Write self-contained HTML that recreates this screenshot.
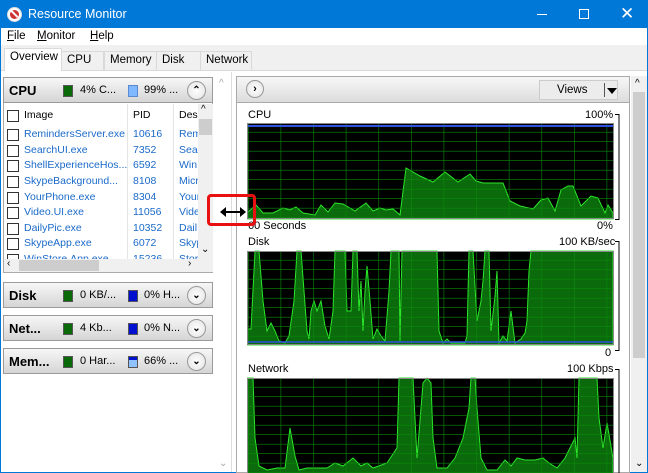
<!DOCTYPE html>
<html><head><meta charset="utf-8"><style>
*{margin:0;padding:0;box-sizing:border-box}
body{width:648px;height:473px;overflow:hidden;background:#f0f0f0;font-family:"Liberation Sans",sans-serif;font-size:11.5px;color:#000;position:relative}
.a{position:absolute}
.title{left:0;top:0;width:648px;height:28px;background:#0078d7;color:#fff;font-size:12.5px}
.menu{left:1px;top:28px;width:646px;height:17px;background:#fff}
.menu span{position:absolute;top:2px}
.tab{position:absolute;top:51px;height:19px;border:1px solid #d9d9d9;border-bottom:none;background:#f0f0f0;padding:2px 5px;font-size:11.5px}
.hdr{position:absolute;left:3px;width:210px;height:26px;border:1px solid #9a9a9a;background:linear-gradient(#f7f7f7,#d5d5d5);}
.hdr b{position:absolute;left:5px;top:5px;font-size:13px}
.sw{position:absolute;top:7px;width:10px;height:12px;border:1px solid #555}
.hdr .t{position:absolute;top:6px;font-size:11px}
.btn{position:absolute;left:183px;top:3px;width:19px;height:19px;border-radius:50%;border:1px solid #999;background:radial-gradient(#fff,#e2e2e2);font-size:10px;text-align:center;line-height:17px;font-weight:bold}
.row{position:absolute;left:4px;width:194px;height:15px;font-size:10.5px;color:#1b6ac9;white-space:nowrap}
.cb{position:absolute;left:3px;top:1px;width:12px;height:12px;border:1px solid #333;background:#fff}
.lbl{position:absolute;font-size:11px}
</style></head><body>
<div class="a title">
 <div class="a" style="left:7px;top:7px;width:15px;height:15px;border-radius:50%;background:#fff;border:1px solid #ddd"><div class="a" style="left:2px;top:2px;width:9px;height:9px;border-radius:50%;background:#c33"></div><div class="a" style="left:2px;top:5px;width:9px;height:2px;background:#fff;transform:rotate(45deg)"></div></div>
 <span class="a" style="left:28px;top:7px">Resource Monitor</span>
 <div class="a" style="left:537px;top:14px;width:10px;height:1px;background:#fff"></div>
 <div class="a" style="left:579px;top:9px;width:10px;height:10px;border:1px solid #fff"></div>
 <span class="a" style="left:620px;top:4px;font-size:17px">✕</span>
</div>
<div class="a" style="left:0;top:28px;width:1px;height:445px;background:#0078d7"></div>
<div class="a" style="left:647px;top:28px;width:1px;height:445px;background:#0078d7"></div>
<div class="a" style="left:0;top:472px;width:648px;height:1px;background:#0078d7"></div>
<div class="a menu"><span style="left:6px"><u>F</u>ile</span><span style="left:36px"><u>M</u>onitor</span><span style="left:89px"><u>H</u>elp</span></div>
<div class="tab" style="left:4px;top:48px;height:23px;width:58px;background:#fff;z-index:2">Overview</div>
<div class="tab" style="left:61px;width:43px">CPU</div>
<div class="tab" style="left:104px;width:53px">Memory</div>
<div class="tab" style="left:156px;width:45px">Disk</div>
<div class="tab" style="left:200px;width:52px">Network</div>
<div class="a" style="left:1px;top:70px;width:646px;height:402px;background:#fff;border-top:1px solid #d9d9d9"></div>

<div class="hdr" style="top:77px"><b>CPU</b><div class="sw" style="left:59px;background:#0a6a0a"></div><span class="t" style="left:76px">4% C...</span><div class="sw" style="left:124px;background:#7fb8ff;border-color:#5a8ad0"></div><span class="t" style="left:140px">99% ...</span><div class="btn">⌃</div></div>
<div class="a" style="left:3px;top:103px;width:210px;height:170px;border:1px solid #aaa;border-top:none;background:#fff"></div>
<div class="a" style="left:127px;top:104px;width:1px;height:155px;background:#e5e5e5"></div>
<div class="a" style="left:173px;top:104px;width:1px;height:155px;background:#e5e5e5"></div>
<div class="row" style="top:109px;color:#000"><div class="cb"></div><span class="a" style="left:20px">Image</span><span class="a" style="left:129px">PID</span><span class="a" style="left:175px">Des</span></div>
<div class="a" style="left:4px;top:124px;width:194px;height:135px;overflow:hidden">
<div class="row" style="top:4px;left:0"><div class="cb"></div><span class="a" style="left:20px">RemindersServer.exe</span><span class="a" style="left:129px">10616</span><span class="a" style="left:175px">Rem</span></div>
<div class="row" style="top:20px;left:0"><div class="cb"></div><span class="a" style="left:20px">SearchUI.exe</span><span class="a" style="left:129px">7352</span><span class="a" style="left:175px">Sear</span></div>
<div class="row" style="top:35px;left:0"><div class="cb"></div><span class="a" style="left:20px">ShellExperienceHos...</span><span class="a" style="left:129px">6592</span><span class="a" style="left:175px">Win</span></div>
<div class="row" style="top:51px;left:0"><div class="cb"></div><span class="a" style="left:20px">SkypeBackground...</span><span class="a" style="left:129px">8108</span><span class="a" style="left:175px">Micr</span></div>
<div class="row" style="top:67px;left:0"><div class="cb"></div><span class="a" style="left:20px">YourPhone.exe</span><span class="a" style="left:129px">8304</span><span class="a" style="left:175px">Your</span></div>
<div class="row" style="top:82px;left:0"><div class="cb"></div><span class="a" style="left:20px">Video.UI.exe</span><span class="a" style="left:129px">11056</span><span class="a" style="left:175px">Vide</span></div>
<div class="row" style="top:98px;left:0"><div class="cb"></div><span class="a" style="left:20px">DailyPic.exe</span><span class="a" style="left:129px">10352</span><span class="a" style="left:175px">Dail</span></div>
<div class="row" style="top:113px;left:0"><div class="cb"></div><span class="a" style="left:20px">SkypeApp.exe</span><span class="a" style="left:129px">6072</span><span class="a" style="left:175px">Skyp</span></div>
<div class="row" style="top:129px;left:0"><div class="cb"></div><span class="a" style="left:20px">WinStore.App.exe</span><span class="a" style="left:129px">15236</span><span class="a" style="left:175px">Stor</span></div>
</div>
<div class="a" style="left:198px;top:104px;width:15px;height:155px;background:#f0f0f0"><span class="a" style="left:3px;top:0;font-size:10px">^</span><div class="a" style="left:1px;top:15px;width:13px;height:16px;background:#cdcdcd"></div><span class="a" style="left:3px;top:140px;font-size:10px">⌄</span></div>
<div class="a" style="left:4px;top:259px;width:209px;height:13px;background:#f0f0f0"><span class="a" style="left:3px;top:-1px;font-size:10px">‹</span><div class="a" style="left:15px;top:1px;width:80px;height:11px;background:#cdcdcd"></div><span class="a" style="left:184px;top:-1px;font-size:10px">›</span></div>

<div class="hdr" style="top:282px"><b>Disk</b><div class="sw" style="left:59px;background:#0a6a0a"></div><span class="t" style="left:76px">0 KB/...</span><div class="sw" style="left:124px;background:#0010d0"></div><span class="t" style="left:140px">0% H...</span><div class="btn">⌄</div></div>
<div class="hdr" style="top:315px"><b>Net...</b><div class="sw" style="left:59px;background:#0a6a0a"></div><span class="t" style="left:76px">4 Kb...</span><div class="sw" style="left:124px;background:#0010d0"></div><span class="t" style="left:140px">0% N...</span><div class="btn">⌄</div></div>
<div class="hdr" style="top:348px"><b>Mem...</b><div class="sw" style="left:59px;background:#0a6a0a"></div><span class="t" style="left:76px">0 Har...</span><div class="sw" style="left:124px;background:linear-gradient(#0010d0 30%,#8fc2ff 30%)"></div><span class="t" style="left:140px">66% ...</span><div class="btn">⌄</div></div>
<span class="a" style="left:219px;top:78px;font-size:10px;color:#aaa">^</span>
<span class="a" style="left:219px;top:458px;font-size:10px;color:#aaa">⌄</span>
<div class="a" style="left:231px;top:72px;width:1px;height:400px;background:#ddd"></div>

<div class="a" style="left:236px;top:76px;width:394px;height:397px;border:1px solid #aaa;background:#fff"></div>
<div class="a" style="left:237px;top:77px;width:392px;height:26px;background:linear-gradient(#f7f7f7,#dcdcdc);border-bottom:1px solid #aaa"></div>
<div class="a" style="left:246px;top:80px;width:18px;height:18px;border-radius:50%;border:1px solid #999;background:radial-gradient(#fff,#e2e2e2);text-align:center;font-size:11px;line-height:16px;font-weight:bold">›</div>
<div class="a" style="left:539px;top:80px;width:79px;height:20px;border:1px solid #ccc;background:#ececec"><span class="a" style="left:17px;top:3px">Views</span><div class="a" style="left:64px;top:2px;width:1px;height:14px;background:#555"></div><div class="a" style="left:67px;top:7px;border-left:5px solid transparent;border-right:5px solid transparent;border-top:6px solid #000"></div></div>

<span class="lbl" style="left:248px;top:109px">CPU</span><span class="lbl" style="left:585px;top:109px">100%</span>
<span class="lbl" style="left:248px;top:220px">60 Seconds</span><span class="lbl" style="left:597px;top:220px">0%</span>
<span class="lbl" style="left:248px;top:236px">Disk</span><span class="lbl" style="left:559px;top:236px">100 KB/sec</span>
<span class="lbl" style="left:605px;top:347px">0</span>
<span class="lbl" style="left:248px;top:363px">Network</span><span class="lbl" style="left:567px;top:363px">100 Kbps</span>
<svg class="a" style="left:615px;top:110px" width="10" height="363"><path d="M0 4.5H4V109.5H0M0 131.5H4V240.5H0M0 259.5H4V363" fill="none" stroke="#000" stroke-width="1"/></svg>

<svg class="a" style="left:247px;top:123px" width="367" height="350">
<defs><pattern id="g" width="32.6" height="9.5" patternUnits="userSpaceOnUse" x="1" y="0"><path d="M0 0V9.5M0 9.5H32.6" stroke="#0a8a0a" stroke-width="1.2" fill="none"/></pattern></defs>
<g>
<rect x="0" y="0" width="367" height="96" fill="#000"/>
<polygon points="0,96 0,90 9,82 16,90 26,90 36,85 43,87 49,84 56,90 68,92 74,82 81,89 88,80 96,81 108,88 119,80 126,88 133,85 139,87 146,86 153,92 159,45 173,53 186,59 198,49 211,59 223,51 229,58 236,60 256,60 263,78 273,83 286,86 294,77 301,75 308,88 314,67 321,63 326,63 334,83 344,73 351,75 358,90 361,82 366,90 366,96" fill="#0b6a0b" stroke="#2be82b" stroke-width="1"/>
<rect x="0" y="0" width="367" height="96" fill="url(#g)"/>
<line x1="0" y1="3" x2="367" y2="3" stroke="#3050e0" stroke-width="2"/>
<rect x="0.5" y="0.5" width="366" height="95" fill="none" stroke="#888"/>
</g>
<g transform="translate(0,128)">
<rect x="0" y="0" width="367" height="94" fill="#000"/>
<polygon points="0,94 0,78 4,78 8,0 12,0 16,50 20,80 24,72 28,80 32,90 38,92 42,85 47,50 50,0 54,0 57,40 60,80 62,88 64,60 67,50 70,60 74,50 78,75 82,88 86,60 88,0 98,0 100,60 104,60 106,0 110,0 112,60 114,30 116,80 118,40 120,15 123,50 126,88 130,78 134,85 138,90 142,40 144,0 152,0 153,90 155,0 190,0 192,80 196,92 200,88 204,92 218,92 220,85 222,0 226,0 230,70 234,50 236,30 238,0 242,0 244,80 248,45 250,20 252,92 256,85 260,90 264,60 268,92 274,88 278,82 280,70 282,20 284,0 366,0 366,94" fill="#0b6a0b" stroke="#2be82b" stroke-width="1"/>
<rect x="0" y="0" width="367" height="94" fill="url(#g)"/>
<line x1="0" y1="91" x2="367" y2="91" stroke="#3050e0" stroke-width="1.5"/>
<rect x="0.5" y="0.5" width="366" height="93" fill="none" stroke="#888"/>
</g>
<g transform="translate(0,255)">
<rect x="0" y="0" width="367" height="100" fill="#000"/>
<polygon points="0,100 0,0 6,0 8,60 12,88 20,92 30,90 38,90 43,50 48,78 52,92 60,90 80,90 88,85 96,88 106,80 114,88 120,85 126,90 140,85 150,70 152,0 166,0 170,80 176,5 180,0 184,5 186,60 190,90 200,90 208,80 216,60 222,30 224,0 228,0 230,30 234,80 240,92 250,92 258,82 264,88 270,80 278,82 288,82 296,80 302,85 310,90 318,80 324,68 328,60 330,80 332,0 350,0 352,40 356,70 360,45 366,80 366,100" fill="#0b6a0b" stroke="#2be82b" stroke-width="1"/>
<rect x="0" y="0" width="367" height="100" fill="url(#g)"/>
<rect x="0.5" y="0.5" width="366" height="100" fill="none" stroke="#888"/>
</g>
</svg>

<div class="a" style="left:631px;top:76px;width:16px;height:396px;background:#f0f0f0"><span class="a" style="left:4px;top:2px;font-size:10px">^</span><div class="a" style="left:2px;top:16px;width:12px;height:266px;background:#cdcdcd"></div><span class="a" style="left:4px;top:382px;font-size:10px">⌄</span></div>

<div class="a" style="left:207px;top:194px;width:49px;height:32px;border:3px solid #e81010;border-radius:4px"></div>
<svg class="a" style="left:219px;top:205px" width="28" height="14"><path d="M3 7H25" stroke="#000" stroke-width="2"/><path d="M1 7L7 2V12Z M27 7L21 2V12Z" fill="#000"/></svg>
</body></html>
